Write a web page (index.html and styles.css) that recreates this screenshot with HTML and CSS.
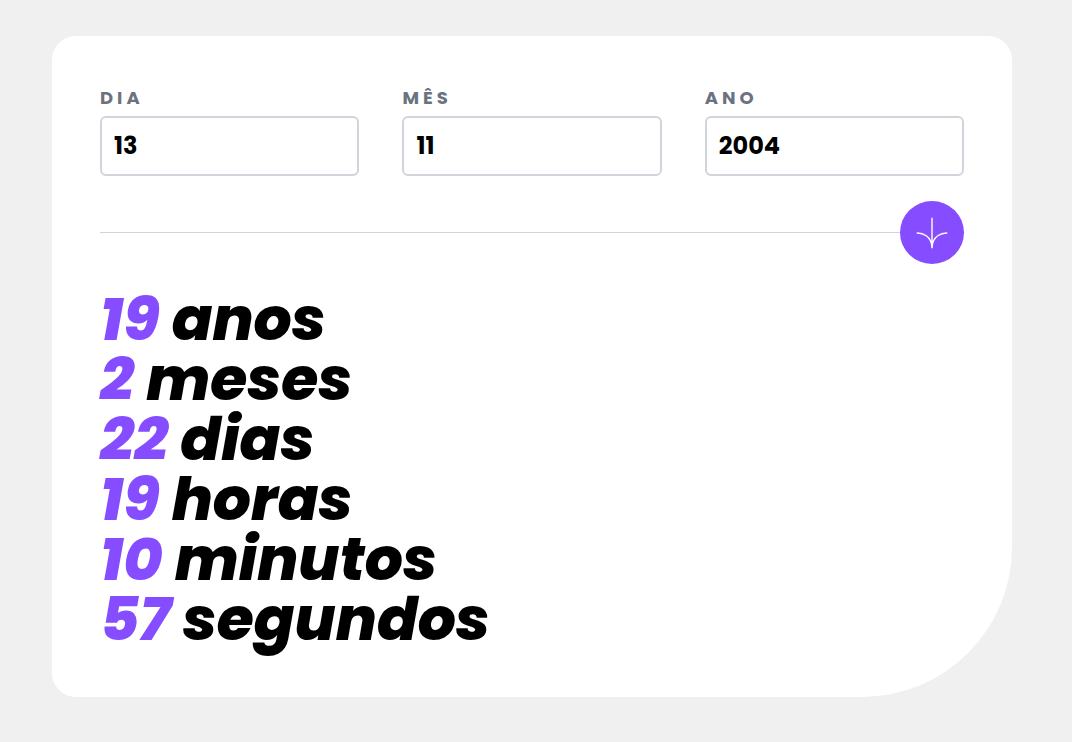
FILE: index.html
```html
<!DOCTYPE html>
<html lang="pt-BR">
<head>
  <meta charset="utf-8">
  <meta name="viewport" content="width=device-width, initial-scale=1">
  <title>Calculadora de idade</title>
  <link rel="stylesheet" href="styles.css">
</head>
<body class="page">
  <main class="card">
    <form class="form">
      <div class="fields">
        <div class="field">
          <label class="field-label" for="day">DIA</label>
          <input class="field-input" id="day" type="text" inputmode="numeric" value="13">
        </div>
        <div class="field">
          <label class="field-label" for="month">MÊS</label>
          <input class="field-input" id="month" type="text" inputmode="numeric" value="11">
        </div>
        <div class="field">
          <label class="field-label" for="year">ANO</label>
          <input class="field-input" id="year" type="text" inputmode="numeric" value="2004">
        </div>
      </div>
      <div class="divider">
        <span class="divider-line"></span>
        <button class="submit" type="button" aria-label="Calcular">
          <svg class="submit-icon" viewBox="0 0 46 44" fill="none" stroke="currentColor" stroke-width="2" aria-hidden="true">
            <path d="M1 22.019C8.333 21.686 23 25.616 23 44M23 44V0M45 22.019C37.667 21.686 23 25.616 23 44"/>
          </svg>
        </button>
      </div>
    </form>
    <section class="results">
      <p class="result"><span class="result-value">19</span> anos</p>
      <p class="result"><span class="result-value">2</span> meses</p>
      <p class="result"><span class="result-value">22</span> dias</p>
      <p class="result"><span class="result-value">19</span> horas</p>
      <p class="result"><span class="result-value">10</span> minutos</p>
      <p class="result"><span class="result-value">57</span> segundos</p>
    </section>
  </main>
</body>
</html>
```

FILE: styles.css
```css
* {
  box-sizing: border-box;
}

.page {
  margin: 0;
  padding: 36px 60px 44px 52px;
  background: #f0f0f0;
  color: #000;
  font-family: Poppins, Inter, "Open Sans", sans-serif;
}

.card {
  max-width: 960px;
  margin: 0 auto;
  padding: 48px;
  background: #fff;
  border-radius: 24px 24px 150px 24px;
}

.fields {
  display: flex;
  justify-content: space-between;
}

.field {
  display: flex;
  flex-direction: column;
  gap: 4px;
  width: 30%;
}

.field-label {
  color: #6b7280;
  font-size: 18px;
  font-weight: 700;
  line-height: 28px;
  letter-spacing: 4px;
}

.field-input {
  width: 100%;
  height: 60px;
  padding: 0 12px 2px;
  border: 2px solid #d1d5db;
  border-radius: 6px;
  background: #fff;
  color: #000;
  font: inherit;
  font-size: 24px;
  font-weight: 700;
}

.divider {
  display: flex;
  align-items: center;
  margin: 25px 0;
}

.divider-line {
  flex: 1;
  height: 1px;
  background: #d1d5db;
}

.submit {
  display: flex;
  align-items: center;
  justify-content: center;
  width: 64px;
  height: 63px;
  padding: 0;
  border: 0;
  border-radius: 50%;
  background: #854dff;
  color: #fff;
  cursor: pointer;
}

.submit-icon {
  width: 32px;
  height: 32px;
}

.result {
  margin: 0;
  font-size: 60px;
  font-style: italic;
  font-weight: 800;
  line-height: 60px;
}

.result-value {
  color: #854dff;
}
```
